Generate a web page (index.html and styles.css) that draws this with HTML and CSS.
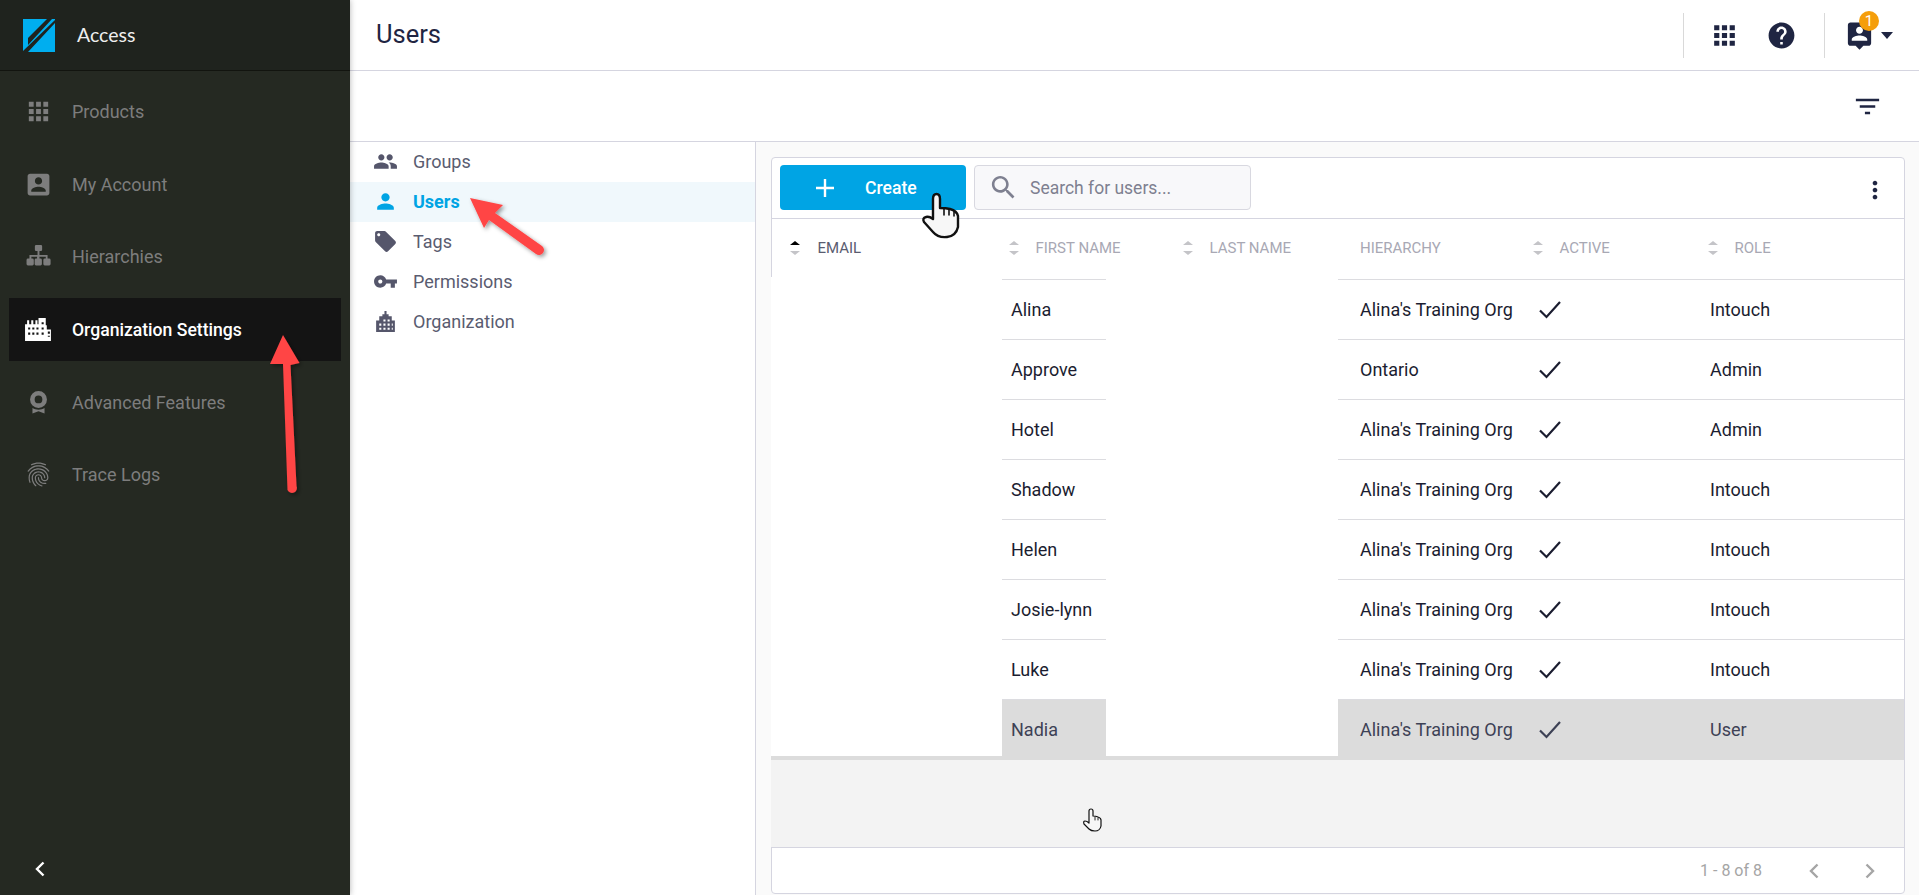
FILE: index.html
```html
<!DOCTYPE html>
<html lang="en">
    <head>
        <meta charset="UTF-8">
        <meta name="viewport" content="width=device-width, initial-scale=1.0">
        <link rel="stylesheet" href="styles.css">
        <title>Users</title>
    </head>
    <body>
        <svg class="icon-defs" width="0" height="0">
            <symbol id="icon-check" viewBox="0 0 24 24">
                <path d="M2 12.5 L8.5 19 L22 4" fill="none" stroke="currentColor" stroke-width="2.2"/>
            </symbol>
        </svg>

        <aside class="sidebar">
            <div class="brand">
                <svg class="logo" viewBox="0 0 32 33">
                    <rect width="32" height="33" fill="#00aeef"/>
                    <path d="M24 0 H29 L5 26 V19 Z M32 1 V4 L5 33 H0 V32 Z" fill="#1f231e"/>
                </svg>
                <span class="brand-name">Access</span>
            </div>
            <nav class="side-nav">
                <a class="side-item" href="#">
                    <svg class="side-icon" viewBox="0 0 24 24"><path d="M4 8h4V4H4v4zm6 12h4v-4h-4v4zm-6 0h4v-4H4v4zm0-6h4v-4H4v4zm6 0h4v-4h-4v4zm6-10v4h4V4h-4zm-6 4h4V4h-4v4zm6 6h4v-4h-4v4zm0 6h4v-4h-4v4z"/></svg>
                    Products
                </a>
                <a class="side-item" href="#">
                    <svg class="side-icon" viewBox="0 0 24 24"><path d="M3 5v14c0 1.1.89 2 2 2h14c1.1 0 2-.9 2-2V5c0-1.1-.9-2-2-2H5c-1.11 0-2 .9-2 2zm12 4c0 1.66-1.34 3-3 3s-3-1.34-3-3 1.34-3 3-3 3 1.34 3 3zm-9 8c0-2 4-3.1 6-3.1s6 1.1 6 3.1v1H6v-1z"/></svg>
                    My Account
                </a>
                <a class="side-item" href="#">
                    <svg class="side-icon" viewBox="0 0 24 24"><path d="M10 2.5h4a1 1 0 0 1 1 1v3a1 1 0 0 1-1 1h-1.2v3.2h6.7v3h1.3a1.2 1.2 0 0 1 1.2 1.2v3.3a1.2 1.2 0 0 1-1.2 1.2h-3.6a1.2 1.2 0 0 1-1.2-1.2v-3.3a1.2 1.2 0 0 1 1.2-1.2h.8v-1.4h-5.2v1.4h.8a1.2 1.2 0 0 1 1.2 1.2v3.3a1.2 1.2 0 0 1-1.2 1.2h-3.6a1.2 1.2 0 0 1-1.2-1.2v-3.3a1.2 1.2 0 0 1 1.2-1.2h.8v-1.4H6.1v1.4h.8a1.2 1.2 0 0 1 1.2 1.2v3.3a1.2 1.2 0 0 1-1.2 1.2H3.3a1.2 1.2 0 0 1-1.2-1.2v-3.3a1.2 1.2 0 0 1 1.2-1.2h1.2v-3h6.7V7.5H10a1 1 0 0 1-1-1v-3a1 1 0 0 1 1-1z"/></svg>
                    Hierarchies
                </a>
                <a class="side-item selected" href="#">
                    <svg class="side-icon" viewBox="0 0 28 24"><path fill-rule="evenodd" d="M1 23V7h2V3h2v4h2V3h2v4h2V3h2v4h1V1h7v7h1v4h4v11H1zM4 10v2h2v-2H4zm4 0v2h2v-2H8zm4 0v2h2v-2h-2zM4 15v2h2v-2H4zm4 0v2h2v-2H8zm4 0v2h2v-2h-2zm5-10v2h2V5h-2zm0 5v2h2v-2h-2zm6 4v2h2v-2h-2zm-6 1v2h2v-2h-2zm6 3v1h2v-1h-2z"/></svg>
                    Organization Settings
                </a>
                <a class="side-item" href="#">
                    <svg class="side-icon" viewBox="0 0 24 24"><path fill-rule="evenodd" d="M12 2.500a7 7 0 1 1 0 14 7 7 0 0 1 0-14zm0 3.800a3.200 3.200 0 1 0 0 6.400 3.200 3.200 0 0 0 0-6.400zM7 16.500c1.500 1 3.200 1.400 5 1.400s3.500-.4 5-1.400V21l-5-1.800L7 21z"/></svg>
                    Advanced Features
                </a>
                <a class="side-item" href="#">
                    <svg class="side-icon" viewBox="0 0 24 24"><path d="M17.81 4.470c-.08 0-.16-.02-.23-.06C15.660 3.420 14 3 12.010 3c-1.980 0-3.860.47-5.580 1.410-.24.13-.54.04-.68-.2-.13-.24-.04-.55.2-.68C7.820 2.520 9.860 2 12.010 2c2.130 0 3.990.47 6.030 1.520.25.13.34.43.21.67-.09.18-.26.28-.44.28zM3.500 9.720c-.1 0-.2-.03-.29-.09-.23-.16-.28-.47-.12-.7.99-1.400 2.250-2.500 3.750-3.270C9.980 4.040 14 4.030 17.150 5.650c1.500.77 2.760 1.860 3.750 3.250.16.22.11.54-.12.7-.23.16-.54.11-.7-.12-.9-1.260-2.040-2.250-3.390-2.940-2.870-1.470-6.540-1.470-9.400.01-1.360.7-2.500 1.700-3.400 2.960-.08.14-.23.21-.39.21zm6.250 12.070c-.13 0-.26-.05-.35-.15-.87-.87-1.340-1.430-2.010-2.640-.69-1.230-1.050-2.730-1.050-4.340 0-2.970 2.540-5.390 5.660-5.390s5.660 2.420 5.660 5.390c0 .28-.22.5-.5.5s-.5-.22-.5-.5c0-2.420-2.090-4.390-4.660-4.390-2.570 0-4.660 1.970-4.660 4.390 0 1.440.32 2.770.93 3.850.64 1.150 1.080 1.640 1.850 2.420.19.2.19.51 0 .71-.11.1-.24.15-.37.15zm7.170-1.850c-1.190 0-2.240-.3-3.100-.89-1.490-1.010-2.380-2.650-2.380-4.390 0-.28.22-.5.5-.5s.5.22.5.5c0 1.410.72 2.740 1.940 3.560.71.48 1.540.71 2.540.71.24 0 .64-.03 1.040-.1.27-.05.53.13.58.41.05.27-.13.53-.41.58-.57.11-1.070.12-1.210.12zM14.910 22c-.04 0-.09-.01-.13-.02-1.590-.44-2.630-1.030-3.720-2.100-1.400-1.390-2.170-3.240-2.170-5.220 0-1.620 1.380-2.940 3.080-2.940 1.700 0 3.080 1.320 3.080 2.940 0 1.070.93 1.940 2.080 1.940s2.080-.87 2.080-1.940c0-3.770-3.250-6.830-7.250-6.830-2.840 0-5.440 1.580-6.610 4.030-.39.81-.59 1.760-.59 2.800 0 .78.07 2.010.67 3.610.1.26-.03.55-.29.64-.26.1-.55-.04-.64-.29-.49-1.310-.73-2.610-.73-3.960 0-1.200.23-2.290.68-3.240 1.330-2.790 4.280-4.600 7.510-4.600 4.550 0 8.250 3.510 8.250 7.830 0 1.620-1.380 2.940-3.080 2.940s-3.080-1.320-3.080-2.940c0-1.070-.93-1.940-2.080-1.940s-2.080.87-2.080 1.940c0 1.710.66 3.310 1.870 4.510.95.94 1.860 1.460 3.270 1.850.27.07.42.35.35.61-.05.23-.26.38-.47.38z"/></svg>
                    Trace Logs
                </a>
            </nav>
            <button class="collapse-button">
                <svg viewBox="0 0 10 16" width="10" height="16"><path d="M8.500 1.500 L2 8 L8.500 14.500" fill="none" stroke="#fff" stroke-width="2.400"/></svg>
            </button>
        </aside>

        <main class="main">
            <header class="topbar">
                <h1 class="page-title">Users</h1>
                <div class="top-actions">
                    <div class="action-group">
                        <svg class="top-icon" viewBox="0 0 24 24"><path d="M4 8h4V4H4v4zm6 12h4v-4h-4v4zm-6 0h4v-4H4v4zm0-6h4v-4H4v4zm6 0h4v-4h-4v4zm6-10v4h4V4h-4zm-6 4h4V4h-4v4zm6 6h4v-4h-4v4zm0 6h4v-4h-4v4z"/></svg>
                        <svg class="top-icon" viewBox="0 0 24 24"><path d="M12 2C6.480 2 2 6.480 2 12s4.480 10 10 10 10-4.480 10-10S17.520 2 12 2zm1 17h-2v-2h2v2zm2.070-7.750l-.9.92C13.450 12.900 13 13.500 13 15h-2v-.5c0-1.100.45-2.100 1.170-2.830l1.240-1.260c.37-.36.59-.86.59-1.410 0-1.100-.9-2-2-2s-2 .9-2 2H8c0-2.210 1.790-4 4-4s4 1.790 4 4c0 .88-.36 1.680-.93 2.250z"/></svg>
                    </div>
                    <div class="action-group user-group">
                        <div class="user-button">
                            <svg class="top-icon" viewBox="0 0 24 24"><path d="M19 2H5c-1.110 0-2 .9-2 2v14c0 1.100.89 2 2 2h4l3 3 3-3h4c1.100 0 2-.9 2-2V4c0-1.100-.9-2-2-2zm-7 3.300c1.490 0 2.700 1.210 2.700 2.700 0 1.490-1.210 2.700-2.700 2.700-1.490 0-2.700-1.210-2.700-2.700 0-1.490 1.210-2.700 2.700-2.700zM18 16H6v-.9c0-2 4-3.100 6-3.100s6 1.100 6 3.100v.9z"/></svg>
                            <span class="badge">1</span>
                        </div>
                        <span class="caret"></span>
                    </div>
                </div>
            </header>

            <div class="filterbar">
                <svg class="top-icon" viewBox="0 0 24 24"><path d="M10 18h4v-2h-4v2zM3 6v2h18V6H3zm3 7h12v-2H6v2z"/></svg>
            </div>

            <div class="content">
                <nav class="sub-nav">
                    <a class="sub-item" href="#">
                        <svg class="sub-icon" viewBox="0 0 24 24"><path d="M16 11c1.660 0 2.990-1.340 2.990-3S17.660 5 16 5c-1.660 0-3 1.340-3 3s1.340 3 3 3zm-8 0c1.660 0 2.990-1.340 2.990-3S9.660 5 8 5C6.340 5 5 6.340 5 8s1.340 3 3 3zm0 2c-2.330 0-7 1.170-7 3.500V19h14v-2.500c0-2.330-4.670-3.500-7-3.500zm8 0c-.29 0-.62.02-.97.05 1.160.84 1.970 1.970 1.970 3.450V19h6v-2.500c0-2.330-4.670-3.500-7-3.500z"/></svg>
                        Groups
                    </a>
                    <a class="sub-item active" href="#">
                        <svg class="sub-icon" viewBox="0 0 24 24"><path d="M12 12c2.210 0 4-1.790 4-4s-1.790-4-4-4-4 1.790-4 4 1.790 4 4 4zm0 2c-2.670 0-8 1.340-8 4v2h16v-2c0-2.660-5.330-4-8-4z"/></svg>
                        Users
                    </a>
                    <a class="sub-item" href="#">
                        <svg class="sub-icon" viewBox="0 0 24 24"><path d="M21.410 11.580l-9-9C12.050 2.220 11.550 2 11 2H4c-1.100 0-2 .9-2 2v7c0 .55.22 1.050.59 1.420l9 9c.36.36.86.58 1.410.58.55 0 1.050-.22 1.410-.59l7-7c.37-.36.59-.86.59-1.410 0-.55-.23-1.060-.59-1.420zM5.500 7C4.670 7 4 6.330 4 5.500S4.670 4 5.500 4 7 4.670 7 5.500 6.330 7 5.500 7z"/></svg>
                        Tags
                    </a>
                    <a class="sub-item" href="#">
                        <svg class="sub-icon" viewBox="0 0 24 24"><path d="M12.650 10C11.830 7.670 9.610 6 7 6c-3.310 0-6 2.690-6 6s2.690 6 6 6c2.610 0 4.830-1.670 5.650-4H17v4h4v-4h2v-4H12.650zM7 14c-1.100 0-2-.9-2-2s.9-2 2-2 2 .9 2 2-.9 2-2 2z"/></svg>
                        Permissions
                    </a>
                    <a class="sub-item" href="#">
                        <svg class="sub-icon" viewBox="0 0 24 24"><path fill-rule="evenodd" d="M3 22V11h3V7h3V5h2V2h2v3h2v2h3v4h3v11H3zm3-8v2h2v-2H6zm0 4v2h2v-2H6zm4-8v2h2v-2h-2zm0 4v2h2v-2h-2zm0 4v2h2v-2h-2zm4-8v2h2v-2h-2zm0 4v2h2v-2h-2zm0 4v2h2v-2h-2zm4-4v2h1v-2h-1zm0 4v2h1v-2h-1z"/></svg>
                        Organization
                    </a>
                </nav>

                <section class="panel">
                    <div class="card">
                        <div class="toolbar">
                            <button class="create-button">
                                <svg viewBox="0 0 18 18" width="18" height="18"><path d="M9 0 V18 M0 9 H18" stroke="#fff" stroke-width="2.400"/></svg>
                                Create
                            </button>
                            <div class="search-box">
                                <svg viewBox="0 0 24 24" width="31" height="31"><path d="M15.500 14h-.79l-.28-.27C15.410 12.590 16 11.110 16 9.500 16 5.910 13.090 3 9.500 3S3 5.910 3 9.500 5.910 16 9.500 16c1.610 0 3.090-.59 4.230-1.570l.27.28v.79l5 4.990L20.490 19l-4.990-5zm-6 0C7.010 14 5 11.990 5 9.500S7.010 5 9.500 5 14 7.010 14 9.500 11.990 14 9.500 14z"/></svg>
                                <span>Search for users...</span>
                            </div>
                            <svg class="more-icon" viewBox="0 0 24 24"><path d="M12 8c1.100 0 2-.9 2-2s-.9-2-2-2-2 .9-2 2 .9 2 2 2zm0 2c-1.100 0-2 .9-2 2s.9 2 2 2 2-.9 2-2-.9-2-2-2zm0 6c-1.100 0-2 .9-2 2s.9 2 2 2 2-.9 2-2-.9-2-2-2z"/></svg>
                        </div>

                        <div class="table-head">
                            <div class="head-cell email-head"><span class="sort sorted"></span>EMAIL</div>
                            <div class="head-cell"><span class="sort"></span>FIRST NAME</div>
                            <div class="head-cell"><span class="sort"></span>LAST NAME</div>
                            <div class="head-cell hierarchy-head">HIERARCHY</div>
                            <div class="head-cell"><span class="sort"></span>ACTIVE</div>
                            <div class="head-cell"><span class="sort"></span>ROLE</div>
                        </div>

                        <div class="table-body">
                            <div class="row">
                                <div class="blank"></div><div class="cell first-name">Alina</div><div class="blank"></div>
                                <div class="cell hierarchy">Alina's Training Org</div>
                                <div class="cell active-cell"><svg class="check"><use href="#icon-check"/></svg></div>
                                <div class="cell role">Intouch</div>
                            </div>
                            <div class="row">
                                <div class="blank"></div><div class="cell first-name">Approve</div><div class="blank"></div>
                                <div class="cell hierarchy">Ontario</div>
                                <div class="cell active-cell"><svg class="check"><use href="#icon-check"/></svg></div>
                                <div class="cell role">Admin</div>
                            </div>
                            <div class="row">
                                <div class="blank"></div><div class="cell first-name">Hotel</div><div class="blank"></div>
                                <div class="cell hierarchy">Alina's Training Org</div>
                                <div class="cell active-cell"><svg class="check"><use href="#icon-check"/></svg></div>
                                <div class="cell role">Admin</div>
                            </div>
                            <div class="row">
                                <div class="blank"></div><div class="cell first-name">Shadow</div><div class="blank"></div>
                                <div class="cell hierarchy">Alina's Training Org</div>
                                <div class="cell active-cell"><svg class="check"><use href="#icon-check"/></svg></div>
                                <div class="cell role">Intouch</div>
                            </div>
                            <div class="row">
                                <div class="blank"></div><div class="cell first-name">Helen</div><div class="blank"></div>
                                <div class="cell hierarchy">Alina's Training Org</div>
                                <div class="cell active-cell"><svg class="check"><use href="#icon-check"/></svg></div>
                                <div class="cell role">Intouch</div>
                            </div>
                            <div class="row">
                                <div class="blank"></div><div class="cell first-name">Josie-lynn</div><div class="blank"></div>
                                <div class="cell hierarchy">Alina's Training Org</div>
                                <div class="cell active-cell"><svg class="check"><use href="#icon-check"/></svg></div>
                                <div class="cell role">Intouch</div>
                            </div>
                            <div class="row">
                                <div class="blank"></div><div class="cell first-name">Luke</div><div class="blank"></div>
                                <div class="cell hierarchy">Alina's Training Org</div>
                                <div class="cell active-cell"><svg class="check"><use href="#icon-check"/></svg></div>
                                <div class="cell role">Intouch</div>
                            </div>
                            <div class="row highlighted">
                                <div class="blank"></div><div class="cell first-name">Nadia</div><div class="blank"></div>
                                <div class="cell hierarchy">Alina's Training Org</div>
                                <div class="cell active-cell"><svg class="check"><use href="#icon-check"/></svg></div>
                                <div class="cell role">User</div>
                            </div>
                        </div>

                        <div class="table-empty"></div>

                        <div class="table-foot">
                            <span class="page-count">1 - 8 of 8</span>
                            <svg class="page-arrow" viewBox="0 0 10 16"><path d="M8.500 1.500 L2 8 L8.500 14.500"/></svg>
                            <svg class="page-arrow" viewBox="0 0 10 16"><path d="M1.500 1.500 L8 8 L1.500 14.500"/></svg>
                        </div>
                    </div>
                </section>
            </div>
        </main>

        <svg class="annotations" viewBox="0 0 1919 895">
            <defs>
                <filter id="arrowShadow" x="-30%" y="-30%" width="160%" height="160%">
                    <feDropShadow dx="2" dy="2" stdDeviation="2" flood-color="#000" flood-opacity="0.4"/>
                </filter>
            </defs>
            <g fill="#ff4545" filter="url(#arrowShadow)">
                <path d="M283 335 L299.500 363 L290.500 365 L296.500 486 A4.500 4.500 0 0 1 287.500 490 L283 364 L270 364 Z"/>
                <path d="M470 198 L503 205 L495 213 L542 246 A4.500 4.500 0 0 1 536 254 L489 220 L484 228 Z"/>
            </g>
            <g fill="#f7f7f7" stroke="#111" stroke-linejoin="round" stroke-linecap="round">
                <path stroke-width="2.400" d="M933 219 L933 199 Q933 194 936.500 194 Q940 194 940 199 L940 208 Q946 208 950 209 Q957 211 958 216 L958 227 Q956 236 947 237 Q938 238 933 232 L924 222 Q922 218 926 217 Q929 216 933 219 Z"/>
                <path stroke-width="1.600" fill="none" d="M944 209 V215 M949 210 V215 M954 212 V216"/>
                <path stroke-width="1.200" d="M1089 823 L1089 811 Q1089 809 1091 809 Q1093 809 1093 811 L1093 816 Q1096 816 1098 817 Q1101 818 1101 820 L1101 826 Q1100 831 1095 831 Q1091 831 1089 829 L1084 824 Q1083 821 1085 821 Q1087 821 1089 823 Z"/>
                <path stroke-width="0.900" fill="none" d="M1095 817 V820 M1098 818 V820"/>
            </g>
        </svg>
    </body>
</html>
```

FILE: styles.css
```css
html,
body {
    height: 100%;
    margin: 0;
}

body {
    display: flex;
    position: relative;
    overflow: hidden;
    font-family: Roboto, Arial, sans-serif;
    font-size: 18px;
    color: #1b1d30;
    background: #fff;
}

a {
    text-decoration: none;
}

.icon-defs {
    position: absolute;
}

/* left dark menu */
.sidebar {
    width: 350px;
    flex-shrink: 0;
    display: flex;
    flex-direction: column;
    background: #252922;
    box-shadow: 0 0 6px rgba(0, 0, 0, 0.3);
    z-index: 1;
}

.brand {
    height: 70px;
    display: flex;
    align-items: center;
    padding-left: 23px;
    background: #1f231e;
    border-bottom: 1px solid #12140f;
}

.logo {
    width: 32px;
    height: 33px;
}

.brand-name {
    margin: 0 0 2px 22px;
    font-family: Lato, Arial, sans-serif;
    font-size: 19.5px;
    color: #eee;
}

.side-nav {
    display: flex;
    flex-direction: column;
    gap: 9.6px;
    padding-top: 9.3px;
}

.side-item {
    height: 63px;
    margin: 0 9px;
    padding-left: 15px;
    display: flex;
    align-items: center;
    gap: 19px;
    font-size: 18px;
    color: #7d7d7d;
}

.side-item.selected {
    background: #141414;
    color: #fff;
    font-size: 17.6px;
    font-weight: 500;
}

.side-icon {
    width: 29px;
    height: 29px;
    fill: #7d7d7d;
}

.selected .side-icon {
    fill: #fff;
}

.collapse-button {
    margin-top: auto;
    margin-bottom: 18px;
    margin-left: 35px;
    padding: 0;
    width: 10px;
    height: 16px;
    border: none;
    background: none;
}

/* top bars */
.main {
    flex-grow: 1;
    min-width: 0;
    display: flex;
    flex-direction: column;
}

.topbar {
    height: 70px;
    flex-shrink: 0;
    display: flex;
    align-items: center;
    justify-content: space-between;
    padding: 0 26px;
    border-bottom: 1px solid #d5d5e0;
}

.page-title {
    margin: 0 0 2px;
    font-size: 25.5px;
    font-weight: 400;
    color: #1f2542;
}

.top-actions {
    display: flex;
}

.action-group {
    height: 45px;
    display: flex;
    align-items: center;
    gap: 26px;
    padding: 0 27px 0 25px;
    border-left: 1px solid #d9d9d9;
}

.user-group {
    gap: 6.5px;
    padding: 0 0 0 18.500px;
}

.top-icon {
    width: 31px;
    height: 31px;
    fill: #1f2542;
}

.user-button {
    position: relative;
    height: 31px;
}

.badge {
    position: absolute;
    top: -8.500px;
    right: -4.500px;
    width: 20px;
    height: 20px;
    border-radius: 50%;
    background: #f59e0b;
    color: #fff;
    font-size: 15px;
    line-height: 20px;
    text-align: center;
}

.caret {
    width: 0;
    height: 0;
    border-left: 6.500px solid transparent;
    border-right: 6.500px solid transparent;
    border-top: 7px solid #1f2542;
}

.filterbar {
    height: 70px;
    flex-shrink: 0;
    display: flex;
    align-items: center;
    justify-content: flex-end;
    padding-right: 36px;
    border-bottom: 1px solid #d5d5e0;
}

/* sub menu and table panel */
.content {
    flex-grow: 1;
    min-height: 0;
    display: flex;
}

.sub-nav {
    width: 405px;
    flex-shrink: 0;
    border-right: 1px solid #d5d5e0;
}

.sub-item {
    height: 40px;
    box-sizing: border-box;
    padding: 0 0 1.500px 23px;
    display: flex;
    align-items: center;
    gap: 15px;
    color: #5a5c70;
}

.sub-item.active {
    background: #f0f8fc;
    color: #00a4e4;
    font-weight: 700;
}

.sub-icon {
    width: 25px;
    height: 25px;
    fill: #55566b;
}

.active .sub-icon {
    fill: #00a4e4;
}

.panel {
    flex-grow: 1;
    min-width: 0;
    display: flex;
    padding: 15px 14px 1px 15px;
    background: #fafafa;
}

.card {
    flex-grow: 1;
    min-width: 0;
    display: flex;
    flex-direction: column;
    background: #fff;
    border: 1px solid #d5d5e0;
    border-radius: 4px;
}

.toolbar {
    height: 61px;
    flex-shrink: 0;
    display: flex;
    align-items: flex-start;
    gap: 8px;
    padding: 7px 7px 0 8px;
    box-sizing: border-box;
    border-bottom: 1px solid #d5d5e0;
}

.create-button {
    width: 186px;
    height: 45px;
    display: flex;
    align-items: center;
    gap: 31px;
    padding: 0 0 0 36px;
    border: none;
    border-radius: 4px;
    background: #00a4e4;
    color: #fff;
    font-family: inherit;
    font-size: 17.6px;
    font-weight: 500;
}

.search-box {
    width: 277px;
    height: 45px;
    box-sizing: border-box;
    display: flex;
    align-items: center;
    gap: 11px;
    padding-left: 13px;
    border: 1px solid #d8d8e0;
    border-radius: 4px;
    background: #f8f8fa;
    font-size: 17.5px;
    color: #7e8090;
    fill: #7e8090;
}

.more-icon {
    width: 28px;
    height: 28px;
    margin: 11px 8px 0 auto;
    fill: #1f2542;
}

/* table */
.table-head {
    height: 60px;
    flex-shrink: 0;
    display: grid;
    grid-template-columns: 230px 174px 162px 188px 175px 1fr;
    box-sizing: border-box;
    padding-bottom: 3px;
    font-size: 15px;
    color: #a8a8b4;
}

.head-cell {
    display: flex;
    align-items: center;
    gap: 16.500px;
    padding-left: 7px;
}

.email-head {
    gap: 17.500px;
    padding-left: 18px;
    color: #5a5c70;
}

.hierarchy-head {
    padding-left: 22px;
}

.sort {
    position: relative;
    width: 10px;
    height: 14px;
}

.sort::before,
.sort::after {
    content: '';
    position: absolute;
    left: 0;
    border-left: 5px solid transparent;
    border-right: 5px solid transparent;
}

.sort::before {
    top: 0;
    border-bottom: 4px solid #c4c4c8;
}

.sort::after {
    bottom: 0;
    border-top: 4px solid #c4c4c8;
}

.sorted::before {
    border-bottom-color: #000;
}

.table-body {
    flex-shrink: 0;
    margin: -2px 0 0 -1px;
    padding-top: 2px;
    background: #fff;
}

.row {
    height: 60px;
    display: grid;
    grid-template-columns: 231px 104px 232px 188px 176px 1fr;
}

.row:first-child {
    height: 61px;
}

.cell {
    display: flex;
    align-items: center;
    border-bottom: 1px solid #dcdce0;
}

.row:first-child .cell {
    border-top: 1px solid #dcdce0;
}

.first-name {
    padding-left: 9px;
}

.hierarchy {
    padding-left: 22px;
}

.active-cell {
    padding-left: 12px;
}

.role {
    padding-left: 8px;
}

.check {
    width: 24px;
    height: 24px;
    color: #1b1d30;
}

.highlighted .cell {
    background: #dcdcdc;
    color: #3d4155;
    border-bottom-color: #dcdcdc;
}

.highlighted .check {
    color: #3d4155;
}

.table-empty {
    flex-grow: 1;
    margin: -4px 0 0 -1px;
    background: #f3f3f3;
    border-top: 4px solid #dcdcdc;
}

.table-foot {
    height: 45px;
    flex-shrink: 0;
    display: flex;
    align-items: center;
    padding-right: 29px;
    justify-content: flex-end;
    border-top: 1px solid #d5d5e0;
    font-size: 16px;
    color: #a5a5a5;
}

.page-count {
    margin-right: 47px;
}

.page-arrow {
    width: 10px;
    height: 16px;
    margin-left: 46px;
    fill: none;
    stroke: #a5a5a5;
    stroke-width: 2.400;
}

.page-count + .page-arrow {
    margin-left: 0;
}

/* red arrows and cursors drawn over the page */
.annotations {
    position: absolute;
    top: 0;
    left: 0;
    width: 1919px;
    height: 895px;
    z-index: 2;
    pointer-events: none;
}
```
